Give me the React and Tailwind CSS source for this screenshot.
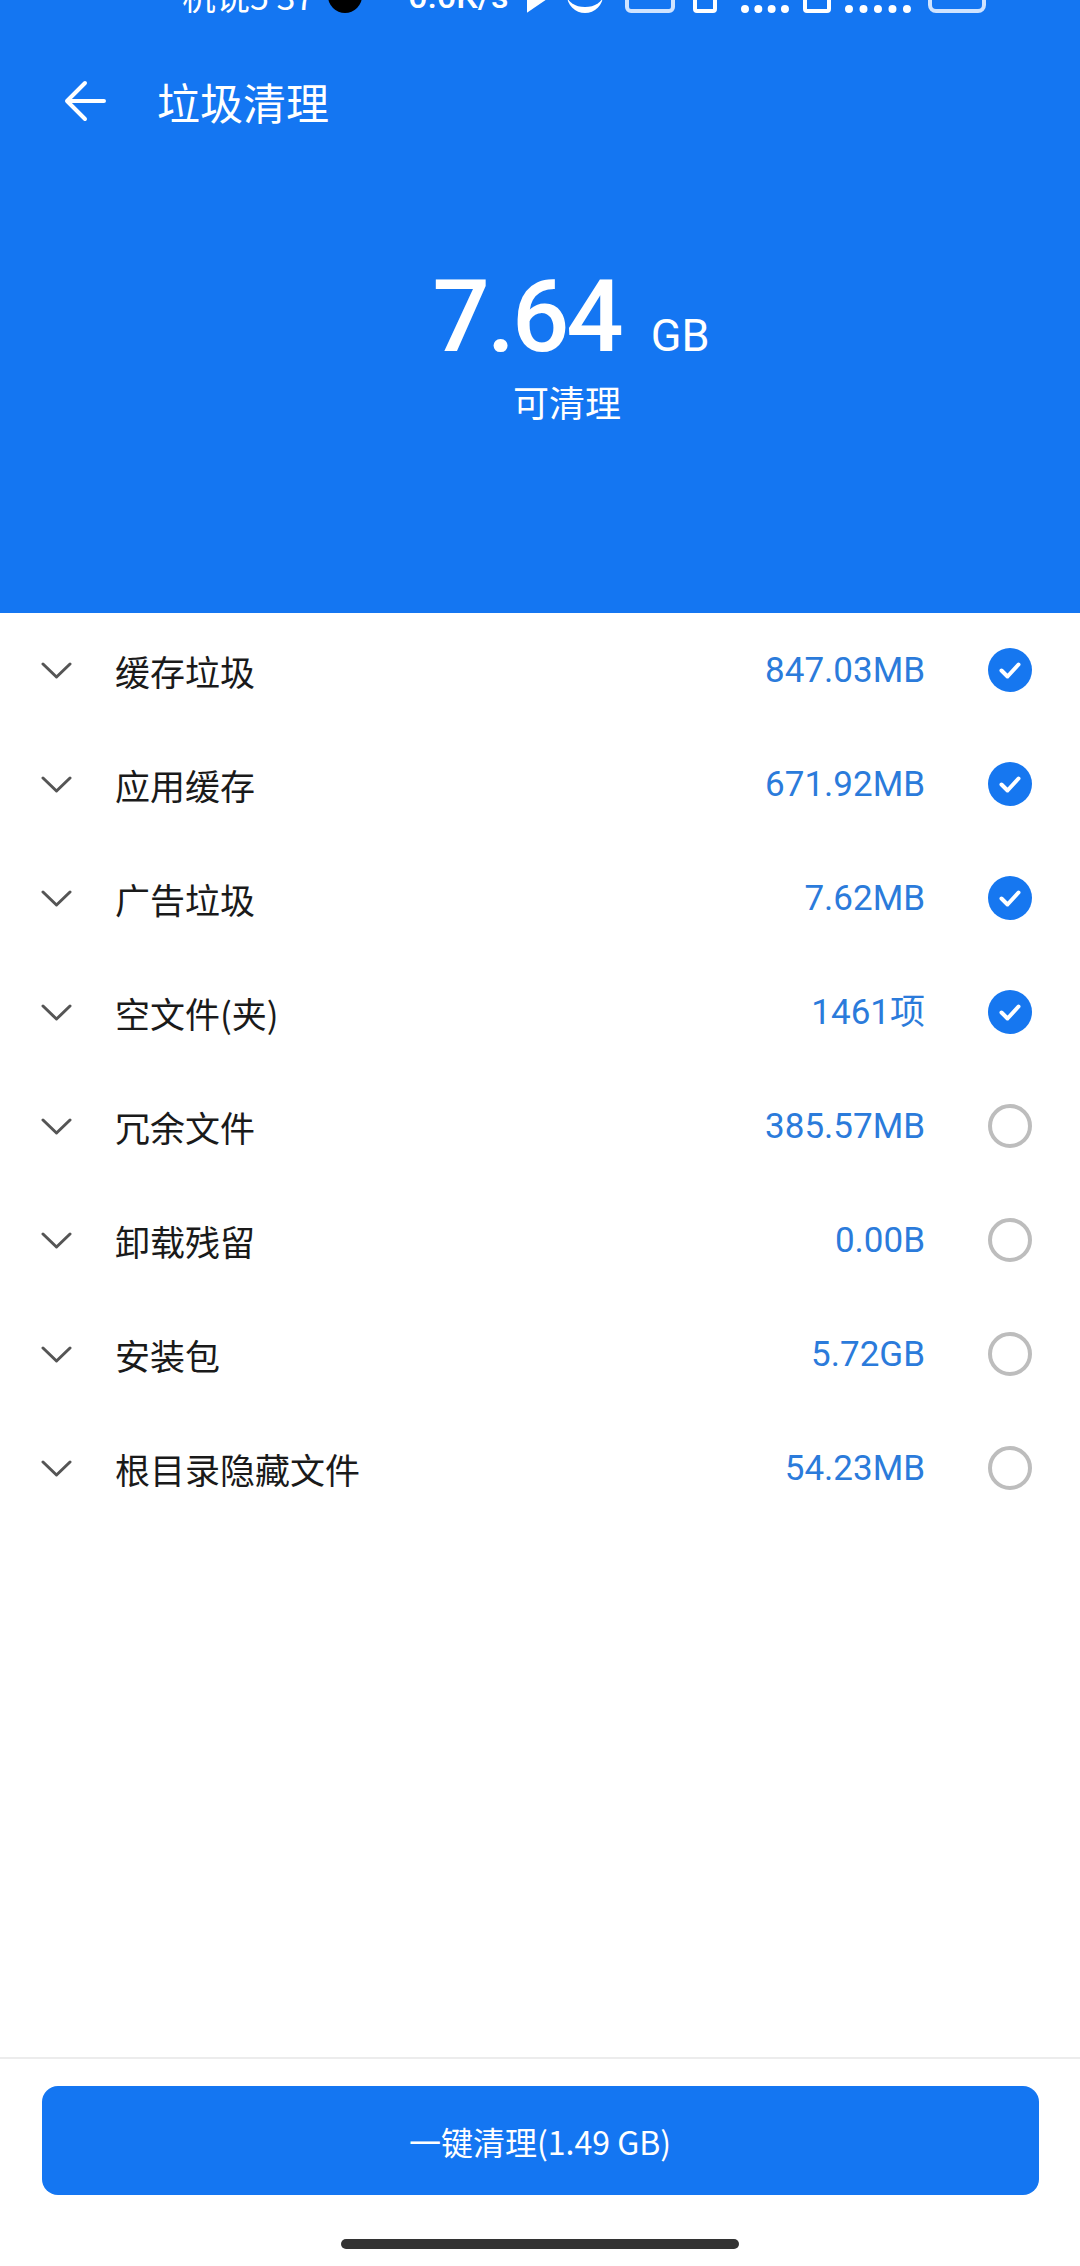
import React from "react";

const items = [
  { name: "缓存垃圾", size: "847.03MB", checked: true },
  { name: "应用缓存", size: "671.92MB", checked: true },
  { name: "广告垃圾", size: "7.62MB", checked: true },
  { name: "空文件(夹)", size: "1461项", checked: true },
  { name: "冗余文件", size: "385.57MB", checked: false },
  { name: "卸载残留", size: "0.00B", checked: false },
  { name: "安装包", size: "5.72GB", checked: false },
  { name: "根目录隐藏文件", size: "54.23MB", checked: false },
];

const cjk = { fontFamily: '"Noto Sans CJK SC", "Noto Sans", sans-serif' };
const num = { fontFamily: 'Roboto, "Noto Sans CJK SC", sans-serif' };

function Chevron() {
  return (
    <svg width="31" height="17" viewBox="0 0 31 17" fill="none">
      <polyline points="2,2 15.5,15 29,2" stroke="#555" strokeWidth="3" strokeLinecap="round" strokeLinejoin="round" />
    </svg>
  );
}

function Check({ checked }) {
  if (checked) {
    return (
      <svg width="44" height="44" viewBox="0 0 44 44">
        <circle cx="22" cy="22" r="22" fill="#1677F0" />
        <path d="M13.5 22.5 L19.5 28.5 L30.5 16.5" stroke="#fff" strokeWidth="4" fill="none" strokeLinecap="round" strokeLinejoin="round" />
      </svg>
    );
  }
  return (
    <svg width="44" height="44" viewBox="0 0 44 44">
      <circle cx="22" cy="22" r="20" fill="none" stroke="#bdbdbd" strokeWidth="4" />
    </svg>
  );
}

function StatusBar() {
  // only the lower edge of the status bar is visible in the shot
  return (
    <div className="h-[13px] overflow-hidden">
      <div className="flex items-end h-[37px] -mt-[24px] text-white text-[34px] leading-none" style={num}>
        <span className="ml-[182px]" style={cjk}>杭说5 37</span>
        <span className="ml-[14px] w-[34px] h-[34px] rounded-full bg-black" />
        <span className="ml-[46px] font-medium">0.0K/s</span>
        <span className="ml-[18px] w-[22px] h-[30px] bg-white [clip-path:polygon(0_0,100%_50%,0_100%)]" />
        <span className="ml-[18px] w-[36px] h-[30px] rounded-b-full border-b-[6px] border-white" />
        <span className="ml-[22px] w-[50px] h-[30px] rounded-[6px] border-[4px] border-[#cfe3ff]" />
        <span className="ml-[18px] w-[24px] h-[30px] rounded-[4px] border-[4px] border-white" />
        <span className="ml-[24px] w-[48px] h-[30px] border-b-[8px] border-white border-dotted" />
        <span className="ml-[14px] w-[28px] h-[30px] rounded-[4px] border-[4px] border-white" />
        <span className="ml-[14px] w-[66px] h-[30px] border-b-[8px] border-white border-dotted" />
        <span className="ml-[17px] w-[58px] h-[30px] rounded-[8px] border-[4px] border-[#cfe3ff]" />
      </div>
    </div>
  );
}

export default function App() {
  return (
    <div className="w-[1080px] h-[2266px] bg-white flex flex-col" style={cjk}>
      <div className="h-[613px] bg-[#1476F2] flex flex-col">
        <StatusBar />
        <div className="h-[176px] flex items-center">
          <svg className="ml-[63px]" width="43" height="42" viewBox="0 0 43 42" fill="none">
            <path d="M41 21 H4 M22 3 L4 21 L22 39" stroke="#fff" strokeWidth="4" strokeLinecap="round" strokeLinejoin="round" />
          </svg>
          <span className="ml-[51px] text-white text-[43px] leading-none">垃圾清理</span>
        </div>
        <div className="mt-[77px] flex items-baseline justify-center pl-[62px] text-white" style={num}>
          <span className="text-[101px] leading-none font-medium tracking-[-3px]">7.64</span>
          <span className="ml-[30px] text-[45px] leading-none">GB</span>
        </div>
        <div className="mt-[16px] text-center pl-[54px] text-white text-[36px] leading-none">可清理</div>
      </div>

      <div className="flex flex-col">
        {items.map((it) => (
          <div key={it.name} className="h-[114px] flex items-center pl-[41px] pr-[48px]">
            <Chevron />
            <span className="ml-[43px] flex-1 text-[35px] leading-none text-[#1a1a1a]">{it.name}</span>
            <span className="text-[35px] leading-none text-[#2B7BDB]" style={num}>{it.size}</span>
            <span className="ml-[63px] flex">
              <Check checked={it.checked} />
            </span>
          </div>
        ))}
      </div>

      <div className="flex-1" />

      <div className="border-t-2 border-[#ececec] flex flex-col items-center">
        <button className="mt-[27px] w-[997px] h-[109px] rounded-[16px] bg-[#1476F2] text-white text-[32px] leading-none">
          一键清理(1.49 GB)
        </button>
        <div className="mt-[44px] w-[398px] h-[10px] rounded-full bg-[#333]" />
        <div className="h-[17px]" />
      </div>
    </div>
  );
}
